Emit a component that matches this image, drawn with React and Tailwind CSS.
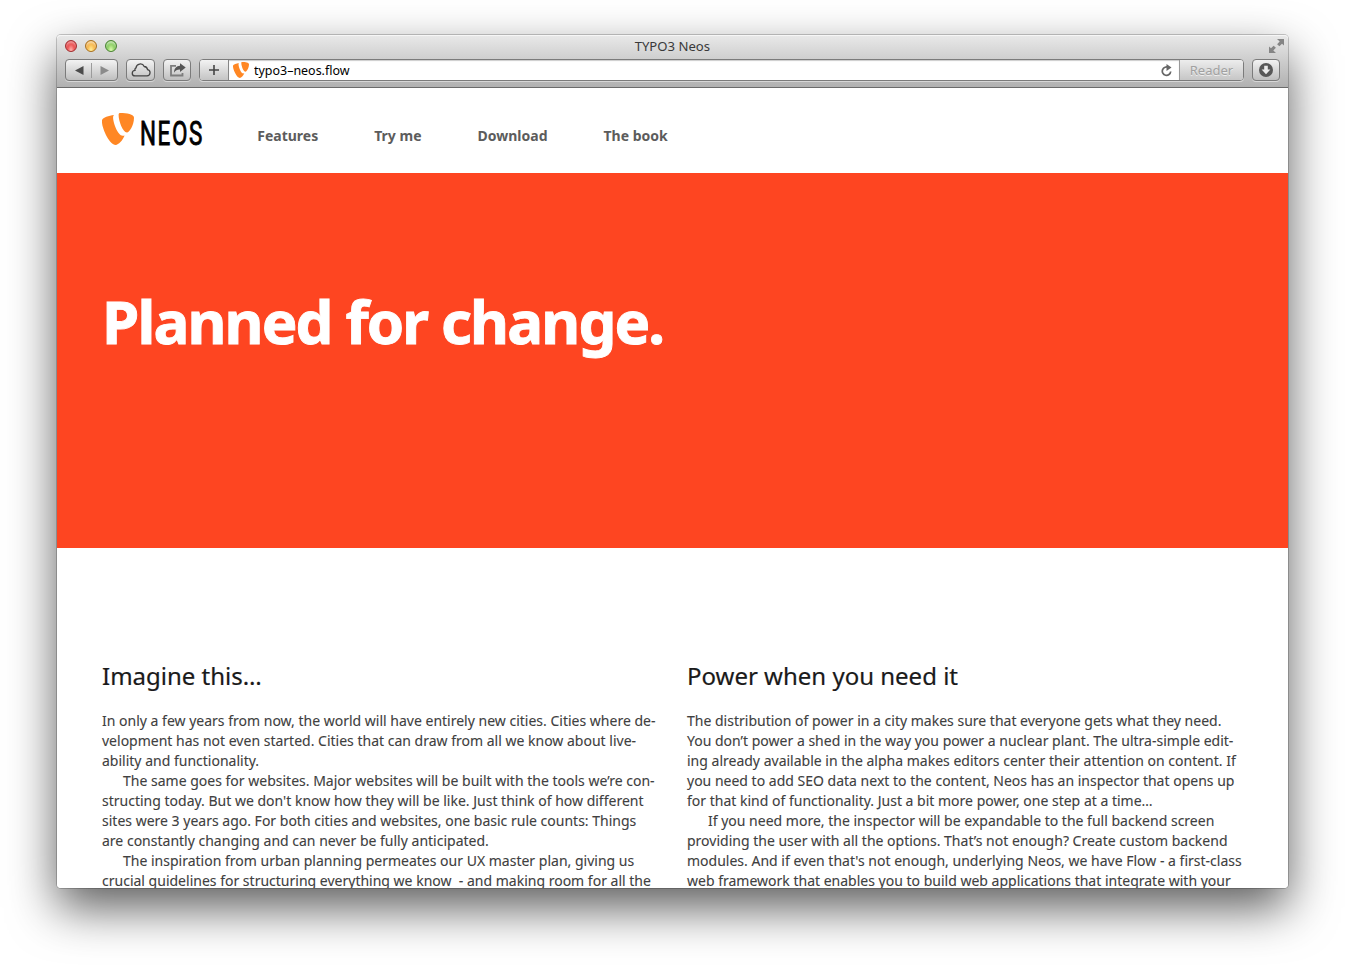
const shield1 = 'M22.6 22.6c-.6.2-1.1.2-1.8.2-5.1 0-9.7-13.5-9.7-18 0-1.700.4-2.200.9-2.700C6.700 2.800 1 4.800.1 6.900c-.4.8-.1 1.700-.1 2.800C.6 16.500 7.700 32 13.700 32c2.800 0 7-4.500 8.900-9.400';
const shield2 = 'M18.200 0C24.700 0 32 1.100 32 4.700c0 7.300-4.700 14.900-7.100 14.900-4.200 0-8.300-11.700-8.300-17.500C16.600.4 17.200 0 18.200 0';

function Shield({ className }) {
  return (
    <svg className={className} viewBox="0 0 32 32" preserveAspectRatio="none" fill="#ff8724">
      <path d={shield1} />
      <path d={shield2} />
    </svg>
  );
}

const btn =
  'h-[22px] shrink-0 flex items-center justify-center rounded-[4px] border border-[#7b7b7b] bg-linear-to-b from-[#f3f3f3] to-[#bfbfbf] shadow-[0_1px_0_rgba(255,255,255,0.45)]';

function Chrome() {
  return (
    <div className="relative h-[53px] shrink-0 rounded-t-[4px] border-b border-[#6b6b6b] bg-linear-to-b from-[#e9e9e9] to-[#b1b1b1] shadow-[inset_0_1px_0_#f6f6f6] font-['Noto_Sans',sans-serif]">
      <div className="flex h-[22px] items-center pl-2">
        <div className="flex gap-2">
          <span className="size-3 rounded-full border border-[#a02c2e] bg-[radial-gradient(ellipse_at_50%_95%,#ffb9b4_0%,#ee5a5a_45%,#d63a41_100%)] shadow-[inset_0_2px_2px_rgba(255,255,255,0.4)]" />
          <span className="size-3 rounded-full border border-[#a8701f] bg-[radial-gradient(ellipse_at_50%_95%,#fff3a0_0%,#f9bd55_45%,#e29c38_100%)] shadow-[inset_0_2px_2px_rgba(255,255,255,0.5)]" />
          <span className="size-3 rounded-full border border-[#4a8332] bg-[radial-gradient(ellipse_at_50%_95%,#e2ffb5_0%,#94d36b_45%,#6bb44f_100%)] shadow-[inset_0_2px_2px_rgba(255,255,255,0.5)]" />
        </div>
        <div className="w-[1110px] text-center text-[13px] leading-[22px] text-[#3a3a3a]">
          <span className="inline-block origin-center scale-x-[1.01]">TYPO3 Neos</span>
        </div>
        <svg className="ml-auto mr-[4px] h-[14px] w-[15px]" viewBox="0 0 15 14" fill="#858585">
          <path d="M8 0h7v6.500l-2-1.800-2.600 2.500-2.300-2 2.600-2.600zM0 7.500l2 1.800 2.600-2.500 2.300 2-2.600 2.600L7 14H0z" />
        </svg>
      </div>
      <div className="mt-[2px] flex items-center pl-2 pr-[8px]">
        <div className={btn + ' w-[53px]'}>
          <svg className="h-5 w-[51px]" viewBox="0 0 51 20">
            <path d="M9 10.500l8.500-4.500v9z" fill="#4b4b4b" />
            <path d="M25.500 3v15" stroke="#9b9b9b" />
            <path d="M43 10.500l-8.500-4.500v9z" fill="#8b8b8b" />
          </svg>
        </div>
        <div className={btn + ' ml-[8px] w-[29px]'}>
          <svg className="h-[14px] w-[20px]" viewBox="0 0 20 14" fill="none" stroke="#454545" strokeWidth="1.300">
            <path d="M4 12.900h12a3.200 3.200 0 0 0 .6-6.300A3.900 3.900 0 0 0 13.200 3.500 4.300 4.300 0 0 0 5 4.900a2.200 2.200 0 0 0-1 2.500 2.700 2.700 0 0 0 0 5.500z" />
          </svg>
        </div>
        <div className={btn + ' ml-[8px] w-[28px]'}>
          <svg className="h-[14px] w-[17px]" viewBox="0 0 17 14">
            <path d="M7 2.900H2v9.600h11.500V10" fill="none" stroke="#7d7d7d" strokeWidth="1.800" />
            <path d="M11 .3L16.700 4.600 11 9V6.600C8.300 6.500 6.500 7.300 5 9.700 5.200 5.600 7.300 3 11 2.800z" fill="#555" />
          </svg>
        </div>
        <div className="ml-[8px] flex h-[22px] w-[1045px] shrink-0 items-stretch overflow-hidden rounded-[4px] border border-[#7b7b7b] bg-white shadow-[0_1px_0_rgba(255,255,255,0.45)]">
          <div className="flex w-[29px] items-center justify-center border-r border-[#868686] bg-linear-to-b from-[#f3f3f3] to-[#c4c4c4]">
            <svg className="size-[10px]" viewBox="0 0 10 10">
              <path d="M5 0v10M0 5h10" stroke="#444" strokeWidth="1.600" />
            </svg>
          </div>
          <div className="flex flex-1 items-center pl-[4px] pr-[7px] shadow-[inset_0_1px_1px_rgba(0,0,0,0.2)]">
            <Shield className="h-[16px] w-[16px]" />
            <span className="ml-[5px] origin-left scale-x-[0.958] text-[13px] leading-5 text-black">typo3–neos.flow</span>
            <svg className="ml-auto h-[13px] w-[11px]" viewBox="0 0 11 13">
              <path d="M7.600 3.500A4.200 4.200 0 1 0 9.700 7.500" fill="none" stroke="#666" strokeWidth="1.700" />
              <path d="M5.500 0l5 3.600-5 3.400z" fill="#666" />
            </svg>
          </div>
          <div className="flex w-[64px] items-center justify-center border-l border-[#999] bg-linear-to-b from-[#ededed] to-[#c6c6c6] text-[13px] leading-5 text-[#a1a1a1] [text-shadow:0_1px_0_#eee]">
            Reader
          </div>
        </div>
        <div className={btn + ' ml-[8px] w-[28px]'}>
          <svg className="size-[14px]" viewBox="0 0 14 14">
            <circle cx="7" cy="7" r="7" fill="#585858" />
            <path d="M5.200 2.800h3.600v3.700h2.600L7 11.200 2.600 6.500h2.600z" fill="#ececec" />
          </svg>
        </div>
      </div>
    </div>
  );
}

const left = [
  'In only a few years from now, the world will have entirely new cities. Cities where de-',
  'velopment has not even started. Cities that can draw from all we know about live-',
  'ability and functionality.',
  '>The same goes for websites. Major websites will be built with the tools we’re con-',
  "structing today. But we don't know how they will be like. Just think of how different",
  'sites were 3 years ago. For both cities and websites, one basic rule counts: Things',
  'are constantly changing and can never be fully anticipated.',
  '>The inspiration from urban planning permeates our UX master plan, giving us',
  'crucial guidelines for structuring everything we know  - and making room for all the',
];
const right = [
  'The distribution of power in a city makes sure that everyone gets what they need.',
  'You don’t power a shed in the way you power a nuclear plant. The ultra-simple edit-',
  'ing already available in the alpha makes editors center their attention on content. If',
  'you need to add SEO data next to the content, Neos has an inspector that opens up',
  'for that kind of functionality. Just a bit more power, one step at a time…',
  '>If you need more, the inspector will be expandable to the full backend screen',
  'providing the user with all the options. That’s not enough? Create custom backend',
  "modules. And if even that's not enough, underlying Neos, we have Flow - a first-class",
  'web framework that enables you to build web applications that integrate with your',
];

function Column({ title, lines }) {
  return (
    <section className="w-[585px]">
      <h2 className="text-[24px] leading-[32px] text-[#1a1a1a] [-webkit-text-stroke:0.2px_#1a1a1a]">{title}</h2>
      <div className="mt-[19px] text-[14px] leading-[20px] tracking-[0.003px] text-[#404040] [-webkit-text-stroke:0.1px_#404040]">
        {lines.map((l) => (
          <p key={l} className={l[0] === '>' ? 'whitespace-pre pl-[21px]' : 'whitespace-pre'}>
            {l.replace('>', '')}
          </p>
        ))}
      </div>
    </section>
  );
}

export default function App() {
  return (
    <div className="h-[967px] w-full overflow-hidden bg-white pl-[57px] pt-[35px] font-['Noto_Sans',sans-serif]">
      <div className="flex h-[853px] w-[1231px] flex-col rounded-[4px] shadow-[0_0_0_1px_rgba(0,0,0,0.2),0_20px_48px_rgba(0,0,0,0.64)]">
        <Chrome />
        <div className="flex min-h-0 flex-1 flex-col overflow-hidden rounded-b-[4px] bg-white">
          <header className="flex h-[85px] shrink-0 items-start pl-[45px]">
            <div className="flex w-[155.25px] pt-[25px]">
              <Shield className="h-[32px] w-[32px]" />
              <span className="ml-[6px] mt-[-1px] h-[40px] origin-left scale-x-[0.68] text-[33px] leading-[44px] tracking-[2.3px] text-black font-['Roboto',sans-serif] [-webkit-text-stroke:0.9px_black]">NEOS</span>
            </div>
            <nav className="flex gap-14 pt-[38px] text-[14px] font-bold leading-5 text-[#5c5c5c]">
              <span>Features</span>
              <span>Try me</span>
              <span>Download</span>
              <span>The book</span>
            </nav>
          </header>
          <div className="h-[375px] shrink-0 bg-[#fe4521] pl-[45px] pt-[106px]">
            <h1 className="whitespace-nowrap text-[60px] font-bold leading-[84px] tracking-[-1.88px] text-white [-webkit-text-stroke:0.9px_white]">Planned for change.</h1>
          </div>
          <div className="flex pl-[45px] pt-[112px]">
            <Column title="Imagine this…" lines={left} />
            <Column title="Power when you need it" lines={right} />
          </div>
        </div>
      </div>
    </div>
  );
}
